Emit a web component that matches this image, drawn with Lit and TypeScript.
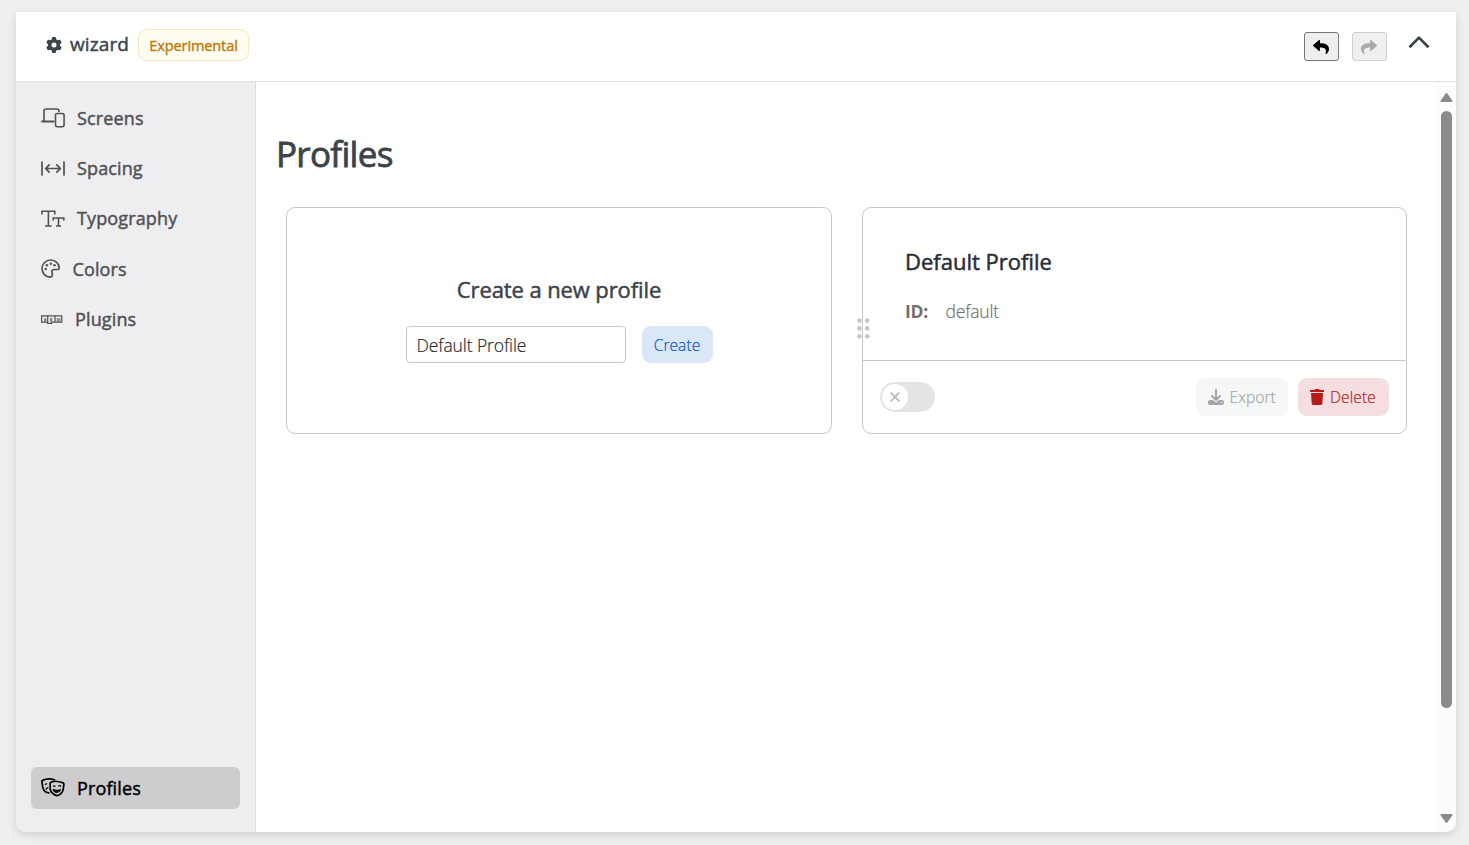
import { LitElement, html, css, svg } from "lit";
import { customElement, property } from "lit/decorators.js";

const icons: Record<string, any> = {
  gear: svg`<path fill="currentColor" d="M495.9 166.6c3.2 8.7 .5 18.4-6.4 24.6l-43.3 39.4c1.1 8.3 1.7 16.8 1.7 25.4s-.6 17.1-1.7 25.4l43.3 39.4c6.9 6.2 9.6 15.9 6.4 24.6c-4.4 11.9-9.7 23.3-15.8 34.3l-4.7 8.1c-6.6 11-14 21.4-22.1 31.2c-5.9 7.2-15.7 9.6-24.5 6.8l-55.7-17.7c-13.4 10.3-28.2 18.9-44 25.4l-12.5 57.1c-2 9.1-9 16.3-18.2 17.8c-13.8 2.3-28 3.5-42.5 3.5s-28.7-1.2-42.5-3.5c-9.2-1.5-16.2-8.7-18.2-17.8l-12.5-57.1c-15.8-6.5-30.6-15.1-44-25.4L83.1 425.9c-8.8 2.8-18.6 .3-24.5-6.8c-8.1-9.8-15.5-20.2-22.1-31.2l-4.7-8.1c-6.1-11-11.4-22.4-15.8-34.3c-3.2-8.7-.5-18.4 6.4-24.6l43.3-39.4C64.6 273.1 64 264.6 64 256s.6-17.1 1.7-25.4L22.4 191.2c-6.9-6.2-9.6-15.9-6.4-24.6c4.4-11.9 9.7-23.3 15.8-34.3l4.7-8.1c6.6-11 14-21.4 22.1-31.2c5.9-7.2 15.7-9.6 24.5-6.8l55.7 17.7c13.4-10.3 28.2-18.9 44-25.4l12.5-57.1c2-9.1 9-16.3 18.2-17.8C227.3 1.2 241.5 0 256 0s28.7 1.2 42.5 3.5c9.2 1.5 16.2 8.7 18.2 17.8l12.5 57.1c15.8 6.5 30.6 15.1 44 25.4l55.7-17.7c8.8-2.8 18.6-.3 24.5 6.8c8.1 9.8 15.5 20.2 22.1 31.2l4.7 8.1c6.1 11 11.4 22.4 15.8 34.3zM256 336a80 80 0 1 0 0-160 80 80 0 1 0 0 160z"/>`,
  reply: svg`<path fill="currentColor" d="M8.309 189.836L184.313 37.851C199.719 24.546 224 35.347 224 56.015v80.053c160.629 1.839 288 34.032 288 186.258 0 61.441-39.581 122.309-83.333 154.132-13.653 9.931-33.111-2.533-28.077-18.631 45.344-145.012-21.507-183.51-176.59-185.742V360c0 20.7-24.3 31.453-39.687 18.164l-176.004-152c-11.071-9.562-11.086-26.753 0-36.328z"/>`,
  trash: svg`<path fill="currentColor" d="M432 32H312l-9.4-18.7A24 24 0 0 0 281.1 0H166.8a23.72 23.72 0 0 0-21.4 13.3L136 32H16A16 16 0 0 0 0 48v32a16 16 0 0 0 16 16h416a16 16 0 0 0 16-16V48a16 16 0 0 0-16-16zM53.2 467a48 48 0 0 0 47.9 45h245.8a48 48 0 0 0 47.9-45L416 128H32z"/>`,
  download: svg`<path fill="currentColor" d="M288 32c0-17.7-14.3-32-32-32s-32 14.3-32 32V274.7l-73.4-73.4c-12.5-12.5-32.8-12.5-45.3 0s-12.5 32.8 0 45.3l128 128c12.5 12.5 32.8 12.5 45.3 0l128-128c12.5-12.5 12.5-32.8 0-45.3s-32.8-12.5-45.3 0L288 274.7V32zM64 352c-35.3 0-64 28.7-64 64v32c0 35.3 28.7 64 64 64H448c35.3 0 64-28.7 64-64V416c0-35.3-28.7-64-64-64H346.5l-45.3 45.3c-25 25-65.5 25-90.5 0L165.5 352H64zm368 56a24 24 0 1 1 0 48 24 24 0 1 1 0-48z"/>`,
  chevron: svg`<path fill="none" stroke="currentColor" stroke-width="2.700" stroke-linecap="butt" stroke-linejoin="round" d="M1.500 11.200 11 1.600l9.500 9.600"/>`,
  grip: svg`<g fill="currentColor"><circle cx="2.4" cy="2.6" r="2.3"/><circle cx="10.2" cy="2.6" r="2.3"/><circle cx="2.4" cy="10.4" r="2.3"/><circle cx="10.2" cy="10.4" r="2.3"/><circle cx="2.4" cy="18.2" r="2.3"/><circle cx="10.2" cy="18.2" r="2.3"/></g>`,
  cross: svg`<path fill="none" stroke="currentColor" stroke-width="1.9" d="M.6.6l8.800 8.800M9.400.6l-8.800 8.800"/>`,
  screens: svg`<g fill="none" stroke="currentColor" stroke-width="1.600" stroke-linejoin="round"><path d="M3 13V3.2Q3 1 5.2 1h10.6Q18 1 18 3.2V4"/><path d="M.3 13.500h13" stroke-width="2"/><rect x="14.500" y="5.500" width="8.600" height="13.2" rx="1.600"/></g>`,
  spacing: svg`<g fill="none" stroke="currentColor" stroke-width="1.700" stroke-linecap="round" stroke-linejoin="round"><path d="M1 1v13M23 1v13M4.600 7.500h14.800M8.200 3.800 4.600 7.500l3.600 3.700M15.800 3.800l3.600 3.700-3.600 3.700"/></g>`,
  typography: svg`<g fill="none" stroke="currentColor" stroke-width="1.600"><path d="M1 4.600V1.200h12.800v3.400M7.400 1.200v14.600M4 16h6.600M12.2 10.500V8h10.600v2.500M17.500 8v8M15 16h5"/></g>`,
  colors: svg`<g fill="none" stroke="currentColor" stroke-width="1.700" stroke-linejoin="round"><path d="M9.2 18.2C4.600 18 1 14.200 1 9.600 1 4.800 4.900 1 9.600 1c4.800 0 8.600 3.700 8.600 8.200 0 .9-.5 1.300-1.400 1.300h-3.500c-1.900 0-2.800 1.100-2.300 2.700.3 1 .4 2.100.3 3-.2 1.300-.8 2-2.100 2z"/></g><g fill="currentColor"><circle cx="4.700" cy="10" r="1.250"/><circle cx="5.900" cy="6.200" r="1.250"/><circle cx="9.800" cy="4.700" r="1.250"/><circle cx="13.500" cy="6.300" r="1.250"/></g>`,
  plugins: svg`<g fill="none" stroke="currentColor"><path stroke-width="1.200" d="M.6.9h20.200v6.200H10.500v1.300H6.600V7.100H.6zM6.700 1v6.300M14 1v6"/><path stroke-width="1.200" opacity=".65" d="M3.600 3.200v3.500M4.800 3.200v3.500M9.500 3v3.800M10.700 3v3M16.200 3.200v3.500M17.600 3.200v3.500M19 3.200v3.500"/></g>`,
  masks: svg`<g fill="none" stroke="currentColor" stroke-width="1.700" stroke-linecap="round" stroke-linejoin="round"><path d="M9.900 4.300C12.900 2.900 18.500 3.300 22.300 5c.5.300.7.700.6 1.300l-.7 5c-.5 3.200-3.500 6.100-6.300 6.300-2.800-.3-6.300-3.300-6.700-6.300L9.100 5.500c0-.6.300-1 .8-1.200z"/><path d="M13.500 1.700C9.700.5 4.900.9 1.500 2.400c-.5.200-.7.600-.6 1.200l.8 5.200c.5 3.100 3.300 5.600 6.200 6.200"/><path stroke-width="1.200" d="M4.300 6.400l1.500-.6M5.200 11.200c.3-.8.900-1.300 1.700-1.500M12.400 8.300c.5-.7 1.300-.7 1.800-.2M17.800 8c.5-.6 1.400-.5 1.900.2"/><path stroke-width="1.400" d="M12.300 11.700c2.200 1 4.900 1.100 7.100.1-.7 1.600-2 2.400-3.500 2.400s-2.900-.8-3.600-2.500z"/></g>`,
};

const glyph = (name: string, w: number, h: number, box = `0 0 ${w} ${h}`) =>
  html`<svg width=${w} height=${h} viewBox=${box} aria-hidden="true">${icons[name]}</svg>`;

const base = css`
  * { box-sizing: border-box; }
  svg { display: block; flex: none; }
  h1, h2, p { margin: 0; white-space: nowrap; }
  button, input { font-family: inherit; margin: 0; }
`;

@customElement("nav-item")
class NavItem extends LitElement {
  @property() label = "";
  @property() icon = "";
  @property({ type: Number }) w = 24;
  @property({ type: Number }) h = 20;
  @property({ type: Boolean, reflect: true }) active = false;
  static styles = [base, css`
    :host { display: block; }
    .item { display: flex; align-items: center; gap: 12px; height: 42px; padding: 0 10px; border-radius: 6px; color: #505153; font-size: 18px; font-weight: 400; white-space: nowrap; }
    .text { letter-spacing: 0.13px; line-height: 24px; -webkit-text-stroke: 0.45px currentColor; }
    :host([active]) .item { background: #cdcdcf; color: #000; }
  `];
  render() {
    return html`<div class="item">${glyph(this.icon, this.w, this.h)}<span class="text">${this.label}</span></div>`;
  }
}

@customElement("app-root")
class AppRoot extends LitElement {
  static styles = [base, css`
    :host { display: block; height: 845px; padding: 12px 13px 13px 16px; background: #efefef; font-family: "Open Sans", "Noto Sans", sans-serif; box-sizing: border-box; overflow: hidden; }
    .window { display: flex; flex-direction: column; height: 820px; border-radius: 0 0 10px 10px; background: #fff; box-shadow: 0 3px 8px rgba(0,0,0,.13); overflow: hidden; }
    .header { display: flex; align-items: center; flex: none; height: 70px; padding: 0 26px 0 30px; border-bottom: 1px solid #e2e2e4; color: #3c434a; }
    .gear { margin-top: -3px; }
    .brand { width: 68px; margin-left: 8px; margin-top: -5px; font-size: 19px; font-weight: 400; letter-spacing: 0.1px; white-space: nowrap; -webkit-text-stroke: 0.45px currentColor; }
    .badge { display: flex; align-items: center; justify-content: center; width: 111px; height: 32px; margin-top: -3px; border: 1px solid #f8e7c4; border-radius: 9px; background: #fffcf0; color: #bd7b0b; font-size: 14.500px; font-weight: 400; letter-spacing: -0.1px; -webkit-text-stroke: 0.4px currentColor; }
    .actions { display: flex; align-items: center; margin-left: auto; color: #3c434a; }
    .tool { display: grid; place-items: center; width: 35px; height: 29px; margin-right: 13px; padding: 0; border: 1px solid #767676; border-radius: 3px; background: #efefef; color: #000; }
    .tool.off { margin-right: 21px; border-color: #cfcfcf; color: #aaa; }
    .tool svg { margin-left: -1px; }
    .tool.off svg { transform: scaleX(-1); }
    .fold { margin-top: -9px; }
    .body { display: flex; flex: 1; min-height: 0; }
    .sidebar { display: flex; flex-direction: column; gap: 8px; width: 240px; padding: 15px 15px 23px; border-right: 1px solid #dcdcde; background: #eeeef0; }
    .low { padding-top: 1px; margin-bottom: -1px; }
    .last { margin-top: auto; }
    .main { flex: 1; padding: 44px 30px 0 20px; }
    h1 { height: 56px; line-height: 56px; color: #3c434a; font-size: 35px; font-weight: 400; letter-spacing: -0.68px; -webkit-text-stroke: 0.8px currentColor; }
    .cards { display: grid; grid-template-columns: 546px 545px; gap: 30px; margin: 25px 0 0 10px; }
    .card { height: 227px; border: 1px solid #c9c9c9; border-radius: 9px; background: #fff; }
    .create { display: flex; flex-direction: column; align-items: center; padding-top: 65px; }
    h2 { height: 32px; line-height: 32px; color: #3c434a; font-size: 22px; font-weight: 400; letter-spacing: -0.1px; -webkit-text-stroke: 0.5px currentColor; }
    .form { display: flex; gap: 16px; margin-top: 21px; }
    .field { width: 220px; height: 37px; padding: 1px 10px 0; border: 1px solid #c9c9c9; border-radius: 4px; outline: 0; background: #fff; color: #2b2b2b; font-size: 17.500px; font-weight: 300; letter-spacing: -0.1px; -webkit-text-stroke: 0.2px currentColor; }
    .button { display: flex; align-items: center; justify-content: center; height: 38px; padding: 0; border: 0; border-radius: 9px; font-size: 15.500px; font-weight: 300; letter-spacing: 0.1px; white-space: nowrap; -webkit-text-stroke: 0.2px currentColor; }
    .primary { width: 71px; height: 37px; background: #dae7f7; color: #0757c8; }
    .profile { position: relative; }
    .info { height: 153px; padding: 37px 0 0 42px; border-bottom: 1px solid #c9c9c9; }
    .info h2 { color: #2b2d35; letter-spacing: 0; }
    .id { display: flex; align-items: center; height: 28px; margin-top: 20px; color: #707070; font-size: 17.500px; font-weight: 300; letter-spacing: -0.2px; }
    .id span { -webkit-text-stroke: 0.2px currentColor; }
    .id b { width: 40.500px; color: #707070; font-weight: 700; }
    .handle { position: absolute; left: -6px; top: 110px; color: #c6c6c6; }
    .foot { display: flex; align-items: center; height: 72px; padding: 0 17px; }
    .toggle { width: 55px; height: 30px; padding: 2px 1.500px; border-radius: 15px; background: #e4e4e4; }
    .knob { display: grid; place-items: center; width: 26px; height: 26px; border-radius: 50%; background: #fff; color: #bcbcbc; }
    .export, .delete { justify-content: flex-start; padding-left: 12px; }
    .export { width: 92px; margin-left: auto; gap: 5.500px; background: #f5f7f6; color: #a3a5a7; }
    .delete { width: 91px; margin-left: 10px; gap: 6px; background: #f4dedf; color: #b71a1c; }
    .track { display: flex; flex-direction: column; align-items: center; width: 19px; padding: 10.500px 0 9.500px; background: #fcfcfc; color: #8b8b8b; }
    .thumb { width: 11px; height: 597px; margin: 9.500px 0 auto; border-radius: 6px; background: #8b8b8b; }
  `];
  render() {
    const items = [
      ["Screens", "screens", 24, 20], ["Spacing", "spacing", 24, 15], ["Typography", "typography", 24, 17],
      ["Colors", "colors", 19.5, 19.5], ["Plugins", "plugins", 22, 9],
    ] as const;
    return html`
      <div class="window">
        <header class="header">
          <span class="gear">${glyph("gear", 16, 16, "0 0 512 512")}</span>
          <span class="brand">wizard</span>
          <span class="badge">Experimental</span>
          <div class="actions">
            <button class="tool" aria-label="Undo">${glyph("reply", 16, 16, "0 0 512 512")}</button>
            <button class="tool off" disabled aria-label="Redo">${glyph("reply", 16, 16, "0 0 512 512")}</button>
            <span class="fold">${glyph("chevron", 22, 13)}</span>
          </div>
        </header>
        <div class="body">
          <nav class="sidebar">
            ${items.map(([l, i, w, h], n) => html`<nav-item class=${n > 2 ? "low" : ""} .label=${l} .icon=${i} .w=${w} .h=${h}></nav-item>`)}
            <nav-item class="last" active .label=${"Profiles"} .icon=${"masks"} .w=${24} .h=${20}></nav-item>
          </nav>
          <main class="main">
            <h1>Profiles</h1>
            <div class="cards">
              <section class="card create">
                <h2>Create a new profile</h2>
                <div class="form">
                  <input class="field" value="Default Profile" />
                  <button class="button primary">Create</button>
                </div>
              </section>
              <section class="card profile">
                <div class="info">
                  <h2>Default Profile</h2>
                  <p class="id"><b>ID:</b><span>default</span></p>
                </div>
                <span class="handle">${glyph("grip", 13, 21)}</span>
                <div class="foot">
                  <div class="toggle"><div class="knob">${glyph("cross", 10, 10)}</div></div>
                  <button class="button export">${glyph("download", 16, 16, "0 0 512 512")}<span>Export</span></button>
                  <button class="button delete">${glyph("trash", 14, 16, "0 0 448 512")}<span>Delete</span></button>
                </div>
              </section>
            </div>
          </main>
          <div class="track">
            <svg width="13" height="9" viewBox="0 0 13 9"><path fill="currentColor" d="M5.700.6Q6.500-.4 7.300.6l5 7q.5 1.100-.8 1.300h-10Q.2 8.700.7 7.600z"/></svg>
            <div class="thumb"></div>
            <svg width="13" height="9" viewBox="0 0 13 9"><path fill="currentColor" d="M5.700 8.400q.8 1 1.600 0l5-7Q12.800.3 11.500.1h-10Q.2.3.7 1.400z"/></svg>
          </div>
        </div>
      </div>`;
  }
}
